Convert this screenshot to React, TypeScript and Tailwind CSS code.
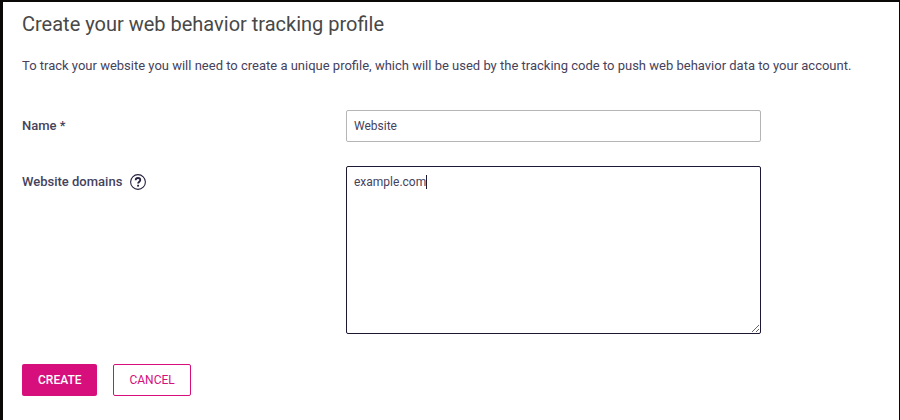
import { useState } from "react";

export default function App() {
	const [name, setName] = useState("Website");
	const [domains, setDomains] = useState("example.com");
	const [showCaret, setShowCaret] = useState(true);

	return (
		<main className="min-h-screen border-t-2 border-r border-l-3 border-[#0b0808] bg-white px-[19px] pt-2 pb-6 font-[Roboto,sans-serif] text-[13px] text-[#45425c]">
			<h1 className="text-xl leading-7 text-[#484848]">
				Create your web behavior tracking profile
			</h1>
			<p className="mt-4 leading-6">
				To track your website you will need to create a unique profile, which
				will be used by the tracking code to push web behavior data to your
				account.
			</p>

			<form onSubmit={(e) => e.preventDefault()}>
				<div className="mt-8 flex">
					<label
						htmlFor="name"
						className="w-[324px] shrink-0 leading-8 font-medium"
					>
						Name *
					</label>
					<input
						id="name"
						type="text"
						value={name}
						onChange={(e) => setName(e.target.value)}
						className="h-8 w-full max-w-[415px] rounded-xs border border-[#b5b5b5] px-[7px] text-xs outline-none"
					/>
				</div>

				<div className="mt-6 flex">
					<div className="flex h-8 w-[324px] shrink-0 items-center gap-2">
						<label htmlFor="domains" className="font-medium">
							Website domains
						</label>
						<button
							type="button"
							aria-label="Help"
							className="text-[#26233f]"
						>
							<svg
								viewBox="0 0 16 16"
								className="size-4"
								fill="none"
								stroke="currentColor"
							>
								<circle cx="8" cy="8" r="7.4" strokeWidth="1.1" />
								<path
									d="M5.7 6.2C5.7 4.8 6.6 4 8 4s2.3.8 2.3 2c0 1.7-2.2 1.8-2.2 3.6"
									strokeWidth="1.8"
								/>
								<path d="M8.1 10.8v1.8" strokeWidth="1.9" />
							</svg>
						</button>
					</div>
					<div className="relative w-full max-w-[415px]">
						<textarea
							id="domains"
							value={domains}
							onChange={(e) => setDomains(e.target.value)}
							onFocus={() => setShowCaret(false)}
							className="block h-[168px] w-full rounded-xs border border-[#1c1935] p-[7px] text-xs outline-none"
						/>
						{/* Resting text cursor, replaced by the real one on focus */}
						{showCaret && (
							<span className="pointer-events-none absolute top-[9px] left-20 h-3.5 w-px bg-[#1c1935]" />
						)}
					</div>
				</div>

				<div className="mt-[30px] flex gap-4 text-xs">
					<button
						type="submit"
						className="h-8 rounded-xs bg-[#d60f7c] px-4 font-medium text-white"
					>
						CREATE
					</button>
					<button
						type="button"
						className="h-8 rounded-xs border border-[#d60f7c] px-[15px] text-[#d60f7c]"
					>
						CANCEL
					</button>
				</div>
			</form>
		</main>
	);
}
